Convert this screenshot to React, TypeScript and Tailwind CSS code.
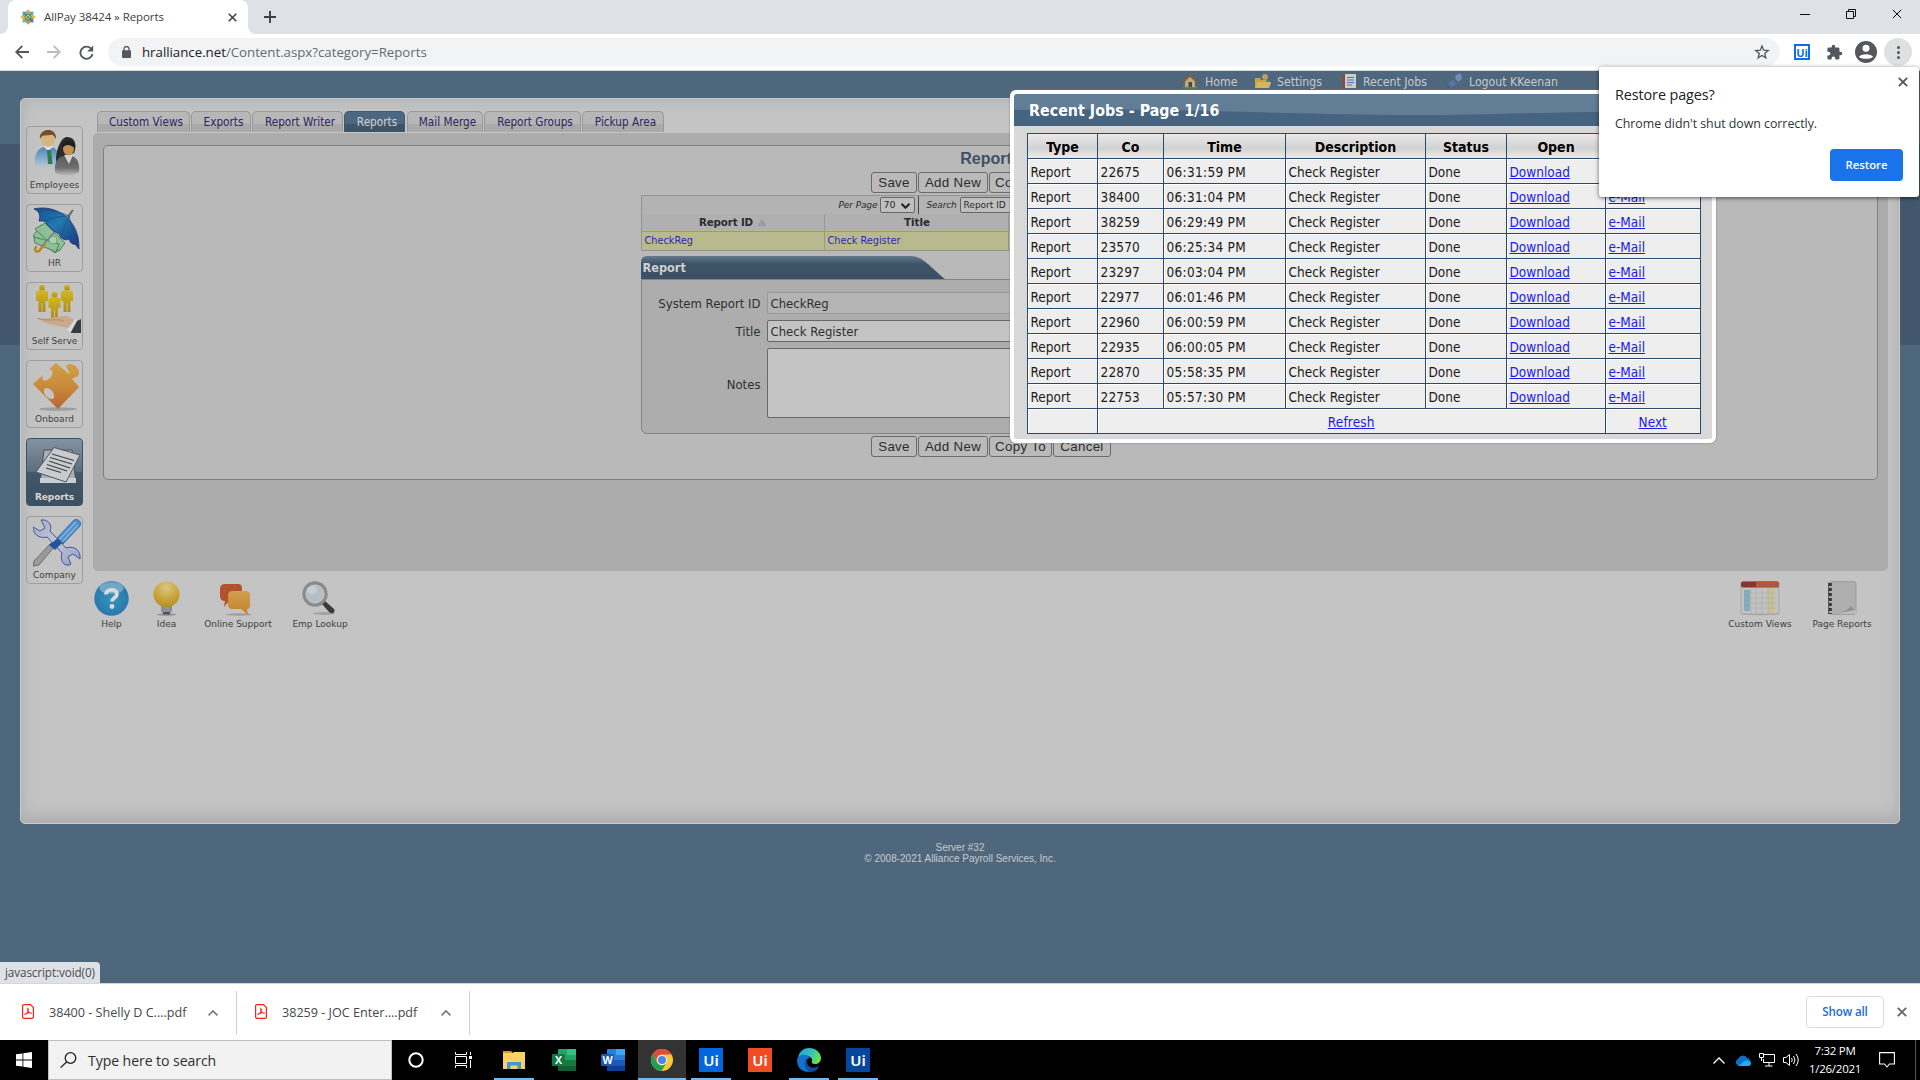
import React from "react";

const TAHOMA = "font-['DejaVu_Sans_Condensed','DejaVu_Sans',sans-serif] [font-stretch:condensed]";
const VERDANA = "font-['DejaVu_Sans',sans-serif]";
const SEGOE = "font-['Open_Sans','Noto_Sans',sans-serif]";

const jobs = [
  ["22675", "06:31:59 PM"],
  ["38400", "06:31:04 PM"],
  ["38259", "06:29:49 PM"],
  ["23570", "06:25:34 PM"],
  ["23297", "06:03:04 PM"],
  ["22977", "06:01:46 PM"],
  ["22960", "06:00:59 PM"],
  ["22935", "06:00:05 PM"],
  ["22870", "05:58:35 PM"],
  ["22753", "05:57:30 PM"],
];

/* ---------- browser frame ---------- */

function Favicon() {
  const petals = [0, 45, 90, 135, 180, 225, 270, 315];
  const colors = ["#e8a33c", "#5aa9c9", "#f0b04a", "#3c8a9c", "#e8863c", "#6fb7a8", "#f0b04a", "#4a9cc0"];
  return (
    <svg className="h-4 w-4" viewBox="0 0 16 16">
      {petals.map((a, i) => (
        <g key={a} transform={`rotate(${a} 8 8)`}>
          <path d="M8 7 L5.6 3 L8 0.3 L10.4 3 Z" fill={colors[i]} />
          <circle cx="8" cy="5" r="0.8" fill="#2f7d5b" />
        </g>
      ))}
      <circle cx="8" cy="8" r="1.6" fill="#4d9a64" />
    </svg>
  );
}

function Cross({ className, w = 1.6 }: { className: string; w?: number }) {
  return (
    <svg className={className} viewBox="0 0 10 10" fill="none" stroke="currentColor" strokeWidth={w}>
      <path d="M0.8 0.8 L9.2 9.2 M9.2 0.8 L0.8 9.2" />
    </svg>
  );
}

function TabStrip() {
  return (
    <div className="flex h-[34px] shrink-0 bg-[#dee1e6]">
      <div className="flex w-2 items-end bg-white"><div className="h-full w-2 rounded-br-lg bg-[#dee1e6]" /></div>
      <div className="flex h-[34px] w-[240px] items-center rounded-t-lg bg-white pl-[12px] pr-[11px]">
        <Favicon />
        <span className={`${SEGOE} ml-2 flex-1 whitespace-nowrap text-[11.5px] tracking-[-0.07px] text-[#3c4043]`}>AllPay 38424 » Reports</span>
        <Cross className="h-[9px] w-[9px] text-[#3c4043]" w={1.7} />
      </div>
      <div className="flex w-2 items-end bg-white"><div className="h-full w-2 rounded-bl-lg bg-[#dee1e6]" /></div>
      <svg className="ml-2 mt-[11px] h-3 w-3" viewBox="0 0 12 12" stroke="#3c4043" strokeWidth="1.9"><path d="M6 0V12M0 6H12" /></svg>
      <div className="ml-auto flex items-start pr-[18px] pt-[9px]">
        <svg className="mr-9 h-[10px] w-[10px]" viewBox="0 0 10 10" stroke="#111"><path d="M0 5.5H10" /></svg>
        <svg className="mr-9 h-[10px] w-[10px]" viewBox="0 0 10 10" fill="none" stroke="#111"><path d="M0.5 2.5H7.5V9.5H0.5Z M2.5 2.5V0.5H9.5V7.5H7.5" /></svg>
        <Cross className="h-[10px] w-[10px] text-black" w={1} />
      </div>
    </div>
  );
}

function Toolbar() {
  return (
    <div className="flex h-[37px] shrink-0 items-center border-b border-[#d5d7da] bg-white">
      <svg className="ml-[15px] h-[14px] w-[14px]" viewBox="0 0 14 14" fill="none" stroke="#54585d" strokeWidth="1.8"><path d="M14 7H1.5M7.3 0.9L1.2 7L7.3 13.1" /></svg>
      <svg className="ml-[18px] h-[14px] w-[14px]" viewBox="0 0 14 14" fill="none" stroke="#babcbe" strokeWidth="1.8"><path d="M0 7H12.5M6.7 0.9L12.8 7L6.7 13.1" /></svg>
      <svg className="ml-[18px] h-[15px] w-[15px]" viewBox="0 0 15 15" fill="none"><path d="M12.5 4.2A6.1 6.1 0 1 0 13.5 9" stroke="#54585d" strokeWidth="1.9" /><path d="M14.2 0.6V6.6H8.2Z" fill="#54585d" /></svg>
      <div className="ml-[14px] flex h-7 w-[1672px] items-center rounded-full bg-[#f1f3f4] pl-[14px] pr-[10px]">
        <svg className="h-3 w-[9px]" viewBox="0 0 9 12"><rect y="4.3" width="9" height="7.7" rx="1" fill="#54585d" /><path d="M2 5V3A2.5 2.5 0 0 1 7 3V5" fill="none" stroke="#54585d" strokeWidth="1.3" /></svg>
        <span className={`${SEGOE} ml-[11px] whitespace-nowrap pt-[1px] text-[13.3px] tracking-[-0.03px] text-[#676b70]`}><span className="text-[#202124]">hralliance.net</span>/Content.aspx?category=Reports</span>
        <svg className="ml-auto h-4 w-4" viewBox="0 0 24 24" fill="none" stroke="#54585d" strokeWidth="2"><path d="M12 3l2.5 6.3 6.8.5-5.2 4.3 1.7 6.7L12 17.2l-5.8 3.6 1.7-6.7L2.7 9.8l6.8-.5z" /></svg>
      </div>
      <div className={`ml-[14px] flex h-4 w-4 items-center justify-center border-2 border-[#0a6fe8] bg-white text-[11px] leading-none text-[#0a6fe8] ${SEGOE} font-bold`}>Ui</div>
      <svg className="ml-4 h-[17px] w-[17px]" viewBox="0 0 24 24" fill="#54585d"><path d="M20.500 11H19V7a2 2 0 0 0-2-2h-4V3.500a2.500 2.500 0 0 0-5 0V5H4a2 2 0 0 0-2 2v3.800h1.500a2.700 2.700 0 0 1 0 5.400H2V20a2 2 0 0 0 2 2h3.800v-1.500a2.700 2.700 0 0 1 5.400 0V22H17a2 2 0 0 0 2-2v-4h1.500a2.500 2.500 0 0 0 0-5z" /></svg>
      <svg className="ml-[12px] h-[22px] w-[22px]" viewBox="0 0 22 22"><circle cx="11" cy="11" r="11" fill="#54585d" /><circle cx="11" cy="7.200" r="3.500" fill="#fff" /><path d="M4 15.800C5.500 12.300 16.500 12.300 18 15.800C16.500 18.500 5.500 18.500 4 15.800Z" fill="#fff" /></svg>
      <div className="ml-[7px] flex h-7 w-7 flex-col items-center justify-center gap-[2px] rounded-full bg-[#dfe0e1]">
        <i className="h-[3px] w-[3px] rounded-full bg-[#54585d]" /><i className="h-[3px] w-[3px] rounded-full bg-[#54585d]" /><i className="h-[3px] w-[3px] rounded-full bg-[#54585d]" />
      </div>
    </div>
  );
}

/* ---------- page icons ---------- */

function EmployeesIcon() {
  return (
    <svg className="h-12 w-12" viewBox="0 0 48 48">
      <defs>
        <linearGradient id="shirt" x1="0" y1="0" x2="0" y2="1"><stop offset="0" stopColor="#5482b8" /><stop offset=".6" stopColor="#8db0cf" /><stop offset="1" stopColor="#c3c7ca" /></linearGradient>
        <linearGradient id="suit" x1="0" y1="0" x2="0" y2="1"><stop offset="0" stopColor="#5c5c5e" /><stop offset=".6" stopColor="#6f6f71" /><stop offset="1" stopColor="#c0c0c0" /></linearGradient>
      </defs>
      <path d="M2 36C1 24 5 19 12 18H18C24 19 27 24 26 36C19 40 9 40 2 36Z" fill="url(#shirt)" />
      <path d="M11 18L15 22L20 18L18 16H12Z" fill="#d8e2ea" />
      <path d="M14 21H18L19.500 35H15Z" fill="#2d7d4c" />
      <ellipse cx="15" cy="9.500" rx="7" ry="8.500" fill="#d5b580" />
      <path d="M7 10C5 -1 24 -3 23 10C21 7 20 5 17 6C13 7 9 5 7 10Z" fill="#73502d" />
      <path d="M24 34C21 30 26 8 34 8C43 8 44 17 41 24L30 29Z" fill="#2a2a2c" />
      <path d="M22 43C21 33 25 27 32 27H38C44 28 47 34 46 43C39 48 28 48 22 43Z" fill="url(#suit)" />
      <path d="M31 26L36 35L40 26Z" fill="#d4d4d4" />
      <ellipse cx="35.500" cy="19.500" rx="5.500" ry="7" fill="#c39252" />
      <path d="M29 20C28 9 42 9 42 19C38 17 34 13 29 20Z" fill="#1f1f21" />
    </svg>
  );
}

function HrIcon() {
  return (
    <svg className="h-12 w-12" viewBox="0 0 48 48">
      <defs><linearGradient id="umb" x1="0" y1="0" x2="1" y2="1"><stop offset="0" stopColor="#174d8c" /><stop offset=".45" stopColor="#2179b0" /><stop offset="1" stopColor="#1c2f7c" /></linearGradient></defs>
      <g fill="#8fbf98" stroke="#3f7d55" strokeWidth=".9">
        <path d="M0 29L8 18L28 42L22 46Z" /><path d="M2 22L12 16L32 36L26 44Z" /><path d="M1 30L26 37L23 45L2 36Z" />
      </g>
      <circle cx="20" cy="33" r="4" fill="#a9cfae" stroke="#5f9a70" strokeWidth=".7" />
      <path d="M38 7L8 40" stroke="#7d7d80" strokeWidth="1.500" />
      <path d="M12 37L6 44C3 46 1 43 3 40" fill="none" stroke="#b98427" strokeWidth="2.400" strokeLinecap="round" />
      <path d="M1 2C20 -3 47 10 46 42L42 37C39 38 37 35 36 32C32 34 28 32 26 27C20 24 15 20 12 14L6 14C8 8 6 4 1 2Z" fill="url(#umb)" stroke="#20306e" strokeWidth=".8" />
      <path d="M1 2C14 2 28 5 36 9C38 18 41 27 46 42M36 9L27 31M36 9C26 9 17 11 10 15" fill="none" stroke="#17507f" strokeWidth=".8" />
      <path d="M36 8L40 3" stroke="#67676b" strokeWidth="2" />
    </svg>
  );
}

function Figure({ x, y }: { x: number; y: number }) {
  return (
    <g transform={`translate(${x} ${y})`}>
      <circle cx="6" cy="2.700" r="2.900" />
      <path d="M0 8Q0 5.500 3 5.500H9Q12 5.500 12 8V16H9.500V27H6.400V18H5.600V27H2.500V16H0Z" />
    </g>
  );
}

function SelfServeIcon() {
  return (
    <svg className="h-12 w-12" viewBox="0 0 48 48">
      <defs><linearGradient id="gold" x1="0" y1="0" x2="0" y2="1"><stop offset="0" stopColor="#d1b722" /><stop offset="1" stopColor="#b08a18" /></linearGradient></defs>
      <g fill="url(#gold)"><Figure x={3} y={0} /><Figure x={28} y={0} /><Figure x={15.5} y={7} /></g>
      <path d="M4 33C14 35 22 31 34 31L42 35L38 43C28 42 14 40 4 33Z" fill="#cba98b" />
      <path d="M4 33C14 37 24 33 31 36" fill="none" stroke="#a98468" strokeWidth=".8" />
      <path d="M34 45L42 34L46 37V47H37Z" fill="#d3dbdf" /><path d="M38 47L44 36L48 34V48H38Z" fill="#3a3d40" />
    </svg>
  );
}

function OnboardIcon() {
  return (
    <svg className="h-12 w-12" viewBox="0 0 48 48">
      <defs><linearGradient id="puz" x1="0" y1="0" x2="0" y2="1"><stop offset="0" stopColor="#d0a047" /><stop offset=".5" stopColor="#c98b39" /><stop offset="1" stopColor="#bb6436" /></linearGradient></defs>
      <ellipse cx="25" cy="46" rx="19" ry="1.800" fill="#8d8d8d" opacity=".7" />
      <path d="M23 0L36 11C38 9 32 6 34 2C38 -1 47 4 46 11C45 15 40 14 39 16L46 24L25 46L0 21Z" fill="url(#puz)" />
      <ellipse cx="14.500" cy="12" rx="4" ry="6.500" transform="rotate(40 14.500 12)" fill="#c4c4c4" />
      <ellipse cx="16" cy="30.500" rx="4" ry="6.500" transform="rotate(-40 16 30.500)" fill="#c4c4c4" />
    </svg>
  );
}

function ReportsIcon() {
  return (
    <svg className="h-12 w-12" viewBox="0 0 48 48">
      <path d="M10 7H38L42 40H6Z" fill="#a9b1b7" stroke="#4a4f54" />
      <path d="M6 35H42V40H6Z" fill="#c7d0d8" />
      <path d="M20 4.500L46 12L32 39L2 29Z" fill="#c9ccce" stroke="#55595d" />
      <path d="M18 11L40 17.500M16 14.500L38 21M15 18L36 25M13 21.500L33 28M12 25L27 29.500" stroke="#3c4044" strokeWidth="1.100" />
    </svg>
  );
}

function CompanyIcon() {
  return (
    <svg className="h-12 w-12" viewBox="0 0 48 48">
      <defs><linearGradient id="wr" x1="0" y1="0" x2="1" y2="1"><stop offset="0" stopColor="#9fabce" /><stop offset=".5" stopColor="#c4c7d0" /><stop offset="1" stopColor="#8d9acb" /></linearGradient></defs>
      <path d="M8 1C14 0 20 5 17 12L33 29C42 26 48 32 47 40L40 35L35 38L38 45C33 49 26 43 29 34L14 18C6 20 0 15 0 8L7 12L12 9Z" fill="url(#wr)" stroke="#4a559c" strokeWidth="1" />
      <path d="M22 27L6 46L0 47L1 42L18 24Z" fill="#9b9b9d" stroke="#5d5d60" strokeWidth=".8" />
      <path d="M16 26L25 19L29 24L22 31Z" fill="#27539c" />
      <path d="M24 19L41 1C45 -1 49 3 47 7L30 25Z" fill="#4f8fc9" stroke="#2b5e9e" strokeWidth=".8" />
      <path d="M27 20L43 3M30 22L45 6" stroke="#86b6da" strokeWidth="1.500" />
    </svg>
  );
}

const sideItems = [
  { label: "Employees", icon: <EmployeesIcon /> },
  { label: "HR", icon: <HrIcon /> },
  { label: "Self Serve", icon: <SelfServeIcon /> },
  { label: "Onboard", icon: <OnboardIcon /> },
  { label: "Reports", icon: <ReportsIcon />, active: true },
  { label: "Company", icon: <CompanyIcon /> },
];

function Sidebar() {
  return (
    <div className="flex w-[72px] shrink-0 flex-col gap-[10px] pl-[5px] pt-[27px]">
      {sideItems.map((s) => (
        <div
          key={s.label}
          className={
            s.active
              ? "h-[68px] w-[57px] rounded border border-[#3c5268] bg-[linear-gradient(#8493a1,#5d6e7f_49%,#42576a_51%,#3d4f60)]"
              : "h-[68px] w-[57px] rounded border border-[#9e9e9e]"
          }
        >
          <div className={s.active ? "ml-[7px] mt-[4px] h-12" : "ml-[6px] mt-[2px] h-12"}>{s.icon}</div>
          <div
            className={
              s.active
                ? `${VERDANA} text-center text-[9px] font-bold leading-[12px] tracking-[-0.1px] text-[#d8d8d8]`
                : `${VERDANA} mt-[2px] whitespace-nowrap text-center text-[9px] leading-[12px] text-[#3f3f3f]`
            }
          >
            {s.label}
          </div>
        </div>
      ))}
    </div>
  );
}

function HeaderLinks() {
  const link = `${TAHOMA} whitespace-nowrap pt-[2px] text-[12.2px] text-[#c6c9cc]`;
  return (
    <div className="flex h-5 items-center pl-[1182px]">
      <svg className="h-4 w-4" viewBox="0 0 16 16"><path d="M3 8V15H13V8L8 3Z" fill="#b9ab8c" /><path d="M0 8.500L8 1L16 8.500L14.500 10L8 4L1.500 10Z" fill="#8c5a35" /><rect x="6.500" y="9" width="3.500" height="6" fill="#57482f" /><rect y="14" width="16" height="1.500" fill="#5f8a4d" /></svg>
      <span className={`${link} ml-[7px] w-[50px]`}>Home</span>
      <svg className="h-4 w-4" viewBox="0 0 16 16"><circle cx="10" cy="4" r="3" fill="#c29a63" /><path d="M6 8Q10 5 14 8V12H6Z" fill="#5680b0" /><path d="M0 5H5L6 7H11V9H16L14 15H0Z" fill="#c9a445" /><path d="M2 9H16L14 15H0Z" fill="#d3b65c" /></svg>
      <span className={`${link} ml-[6px] w-[64px]`}>Settings</span>
      <svg className="h-4 w-4" viewBox="0 0 16 16"><rect x="2" y="1" width="13" height="14" fill="#c9cdd1" /><rect x="1" y="1" width="3" height="14" fill="#8d4a44" /><path d="M6 4.500H13M6 7H13M6 9.500H13M6 12H11" stroke="#5674a8" /></svg>
      <span className={`${link} ml-[6px] w-[84px]`}>Recent Jobs</span>
      <svg className="h-4 w-4" viewBox="0 0 16 16"><path d="M9 2L14 0L15 6L11 9L8 5Z" fill="#6d8bb5" /><path d="M2 9L6 7L9 11L5 14L1 13Z" fill="#5877a8" /><path d="M0 16L3 12M14 1L16 0" stroke="#3d5a88" strokeWidth="1.500" /></svg>
      <span className={`${link} ml-[6px]`}>Logout KKeenan</span>
    </div>
  );
}

/* ---------- page body ---------- */

const pageTabs = [
  { label: "Custom Views", box: "w-[93px] mr-[1px]" },
  { label: "Exports", box: "w-[60px] mr-[1px]" },
  { label: "Report Writer", box: "w-[91px] mr-[1px]" },
  { label: "Reports", box: "w-[61px] mr-[2px]", active: true },
  { label: "Mail Merge", box: "w-[76px] mr-[1px]" },
  { label: "Report Groups", box: "w-[97px] mr-[1px]" },
  { label: "Pickup Area", box: "w-[82px]" },
];

function PageTabs() {
  return (
    <div className="flex h-[21px] pl-[4px]">
      {pageTabs.map((t) => (
        <div
          key={t.label}
          className={`${t.box} ${TAHOMA} flex items-center justify-center whitespace-nowrap rounded-t-[5px] border border-b-0 pl-[5px] pt-[2px] text-[11.7px] ${
            t.active
              ? "border-[#3f5870] bg-[linear-gradient(#4c6780_60%,#3e5468_61%)] text-[#d0d0d0]"
              : "border-[#989898] bg-[linear-gradient(#b7b7b7_60%,#aaaaaa_61%)] text-[#2c2560]"
          }`}
        >
          {t.label}
        </div>
      ))}
    </div>
  );
}

function ButtonRow() {
  const b = "flex h-[21px] items-center justify-center whitespace-nowrap rounded-[3px] border border-[#6b6b6b] bg-[#bababa]";
  return (
    <div className="flex justify-center gap-[1px] pl-[1px] font-['Liberation_Sans',Arial,sans-serif] text-[13.33px] tracking-[0.3px] text-[#2c2c2c]">
      <div className={`${b} w-[46px]`}>Save</div>
      <div className={`${b} w-[70px]`}>Add New</div>
      <div className={`${b} w-[63px]`}>Copy To</div>
      <div className={`${b} w-[58px]`}>Cancel</div>
    </div>
  );
}

function ReportForm() {
  return (
    <div className="mx-auto flex w-[700px] flex-col">
      <div className="flex h-[26px] items-center justify-center font-['Liberation_Sans',Arial,sans-serif] text-[16px] font-bold text-[#3d5266]">Reports</div>
      <ButtonRow />
      <div className={`${VERDANA} mt-[2px] h-[56px] border border-[#939393] text-[#2b2b2b]`}>
        <div className="flex h-[18px] items-center bg-[#b3b3b3] pl-[197px] text-[9px]">
          <span className="w-[41px] whitespace-nowrap pt-[2px] italic tracking-[-0.1px]">Per Page</span>
          <span className="flex h-4 w-[35px] items-center justify-between rounded-[2px] border border-[#666] bg-[#bfbfbf] pl-[3px] pr-1 pt-[1px] text-[9.5px]">
            70
            <svg className="h-[6px] w-[9px]" viewBox="0 0 9 6" fill="none" stroke="#222" strokeWidth="2"><path d="M0.500 0.800L4.500 4.800L8.500 0.800" /></svg>
          </span>
          <span className="ml-[3px] h-[18px] w-px bg-[#444]" />
          <span className="ml-[8px] w-[33px] whitespace-nowrap pt-[2px] italic tracking-[-0.2px]">Search</span>
          <span className="flex h-4 w-[90px] items-center rounded-[2px] border border-[#666] bg-[#bfbfbf] pl-[3px] pt-[2px]">Report ID</span>
        </div>
        <div className="grid h-4 grid-cols-[183px_1fr_331px] bg-[#b0b0b0] text-[10.3px] font-bold leading-[17px]">
          <div className="flex items-center justify-center gap-[5px] border-b border-r border-[#979797] tracking-[-0.15px]">
            Report ID
            <svg className="h-[7px] w-2" viewBox="0 0 8 7"><path d="M4 0.700L7.500 6.500H0.500Z" fill="#a0a0a0" stroke="#888" strokeWidth=".6" /></svg>
          </div>
          <div className="border-b border-r border-[#979797] pl-[2px] text-center">Title</div>
          <div className="border-b border-[#979797]" />
        </div>
        <div className={`grid h-5 grid-cols-[183px_1fr_331px] bg-[#b9b98f] ${TAHOMA} text-[10.8px] leading-[21px] text-[#2d28b8]`}>
          <div className="border-r border-[#979797] pl-[3px]">CheckReg</div>
          <div className="border-r border-[#979797] pl-[3px]">Check Register</div>
          <div />
        </div>
      </div>
      <div className="mt-[5px] flex h-[23px] items-center">
        <div className={`relative flex h-[23px] w-[304px] items-center ${TAHOMA} text-[12.6px] font-bold text-[#cfcfcf]`}>
          <svg className="absolute inset-0 h-full w-full" viewBox="0 0 304 23">
            <defs><linearGradient id="cap" x1="0" y1="0" x2="0" y2="1"><stop offset="0" stopColor="#66788a" /><stop offset=".35" stopColor="#3d5368" /><stop offset="1" stopColor="#3b5064" /></linearGradient></defs>
            <path d="M0 23V6Q0 0 6 0H270C282 0 290 12 304 23Z" fill="url(#cap)" />
          </svg>
          <span className="relative pl-[2px] pt-[1px]">Report</span>
        </div>
      </div>
      <div className={`h-[155px] rounded-b-md border border-[#848484] bg-[#adadad] pt-3 ${TAHOMA} text-[13px] text-[#2f2f2f]`}>
        <div className="flex h-[22px] items-center"><span className="w-[119px] pt-[2px] text-right">System Report ID</span><div className="ml-[6px] h-[22px] w-[500px] rounded-[2px] border border-[#999] bg-[#b4b4b4] pl-[3px] leading-[22px]">CheckReg</div></div>
        <div className="mt-[6px] flex h-[22px] items-center"><span className="w-[119px] pt-[2px] text-right">Title</span><div className="ml-[6px] h-[22px] w-[500px] rounded-[2px] border border-[#686868] bg-[#c4c4c4] pl-[3px] leading-[22px]">Check Register</div></div>
        <div className="mt-[6px] flex h-[70px] items-center"><span className="w-[119px] pt-[4px] text-right">Notes</span><div className="ml-[6px] h-[70px] w-[500px] rounded-[2px] border border-[#686868] bg-[#c4c4c4]" /></div>
      </div>
      <div className="mt-[2px]"><ButtonRow /></div>
    </div>
  );
}

function BottomTools() {
  const label = `${VERDANA} mt-[2px] whitespace-nowrap text-center text-[9px] leading-[12px] text-[#404040]`;
  return (
    <div className="flex pr-[16px] pt-[10px]">
      <div className="flex w-[37px] flex-col items-center">
        <svg className="h-[35px] w-[35px]" viewBox="0 0 35 35">
          <defs><radialGradient id="help" cx=".5" cy=".5" r=".6"><stop offset="0" stopColor="#3095bf" /><stop offset="1" stopColor="#2b73a8" /></radialGradient></defs>
          <circle cx="17.500" cy="17.500" r="17.200" fill="url(#help)" />
          <ellipse cx="17.500" cy="7" rx="12" ry="6" fill="#b6cfdb" opacity=".5" />
          <path d="M12 13.500C12 7.500 23 7.500 23 13C23 16.500 18 16.800 18 20.500" fill="none" stroke="#dadada" strokeWidth="3.800" /><circle cx="18" cy="25.500" r="2.400" fill="#dadada" />
        </svg>
        <div className={label}>Help</div>
      </div>
      <div className="ml-[18px] flex w-[37px] flex-col items-center">
        <svg className="h-[35px] w-[27px]" viewBox="0 0 27 35">
          <defs><radialGradient id="bulb" cx=".5" cy=".25" r=".75"><stop offset="0" stopColor="#d9c983" /><stop offset=".6" stopColor="#c9a53a" /><stop offset="1" stopColor="#b68f23" /></radialGradient></defs>
          <ellipse cx="13.500" cy="33.500" rx="10" ry="1.400" fill="#999" /><rect x="8" y="24" width="11" height="7.500" rx="1.500" fill="#8e9296" /><rect x="10" y="31" width="7" height="2.500" fill="#4f5356" />
          <path d="M13.500 0.500A12.800 12.800 0 0 1 20 24.500C16 26.500 11 26.500 7 24.500A12.800 12.800 0 0 1 13.500 0.500Z" fill="url(#bulb)" />
        </svg>
        <div className={label}>Idea</div>
      </div>
      <div className="ml-[19px] flex w-[68px] flex-col items-center">
        <svg className="mr-[5px] h-[35px] w-[31px]" viewBox="0 0 31 35">
          <defs><linearGradient id="bub" x1="0" y1="0" x2="0" y2="1"><stop offset="0" stopColor="#cfa04f" /><stop offset="1" stopColor="#c77f2b" /></linearGradient></defs>
          <ellipse cx="19" cy="33.500" rx="13" ry="1.200" fill="#9d9d9d" />
          <path d="M5 3H18Q22 3 22 7V16Q22 20 18 20H9L4 26L5 20Q0 20 0 15V8Q0 3 5 3Z" fill="#b3532b" />
          <path d="M13 10H26Q30 10 30 14V24Q30 28 27 28L28 34L21 28H13Q8 28 8 24V14Q8 10 13 10Z" fill="url(#bub)" />
        </svg>
        <div className={label}>Online Support</div>
      </div>
      <div className="ml-[20px] flex w-14 flex-col items-center">
        <svg className="mr-[3px] h-[35px] w-[34px]" viewBox="0 0 34 35">
          <ellipse cx="22" cy="32.500" rx="11" ry="1.400" fill="#a3a3a3" /><path d="M23 20L32 28C34 31 30 34 27 31L20 23Z" fill="#3a3a3a" />
          <circle cx="13" cy="13" r="11" fill="#b4c0c8" stroke="#8b8b8b" strokeWidth="3.400" /><circle cx="13" cy="13" r="9" fill="none" stroke="#c6c6c6" /><ellipse cx="10" cy="9" rx="5" ry="4" fill="#ccd5da" opacity=".7" />
        </svg>
        <div className={label}>Emp Lookup</div>
      </div>
      <div className="ml-auto flex w-16 flex-col items-center">
        <svg className="h-[35px] w-[40px]" viewBox="0 0 40 35">
          <ellipse cx="20" cy="33" rx="20" ry="1.200" fill="#a4a4a4" /><rect x="1" y="1" width="38" height="32" rx="2" fill="#c2c2c2" stroke="#a6a6a6" />
          <rect x="1" y="0.500" width="38" height="6" rx="2" fill="#86362f" /><path d="M16 0.500H37Q39 0.500 39 3V6H16Z" fill="#b0583a" />
          <rect x="4" y="9" width="6" height="21" fill="#7fabbd" /><rect x="28" y="7" width="6" height="25" fill="#c6c18d" />
          <path d="M11 7V32M16 7V32M22 7V32M28 7V32M4 12H36M4 17H36M4 22H36M4 27H36" stroke="#b0b0b0" strokeWidth=".7" />
        </svg>
        <div className={label}>Custom Views</div>
      </div>
      <div className="ml-[20px] flex w-[60px] flex-col items-center">
        <svg className="h-[35px] w-[29px]" viewBox="0 0 29 35">
          <rect x="2" y="0.500" width="26" height="33" rx="2" fill="#aeaeae" stroke="#9e9e9e" /><path d="M8 33L22 27L24 25L28 30V33Z" fill="#bcbcbc" /><path d="M9 33C16 31 20 30 27 29L23 25C20 29 14 31 9 33Z" fill="#8e8e8e" />
          <path d="M2 2V33" stroke="#333" strokeWidth="3.500" strokeDasharray="3 2" /><path d="M0.500 1.500V32" stroke="#555" />
        </svg>
        <div className={label}>Page Reports</div>
      </div>
    </div>
  );
}

function WebPage() {
  return (
    <div className="h-[912px] shrink-0 bg-[linear-gradient(#4f677d_0_73px,#43576c_73px_274px,#4f677d_274px)]">
      <HeaderLinks />
      <div className="mx-5 mt-[7px] flex h-[726px] rounded-[5px] border border-[#cacaca] bg-[#c4c4c4] shadow-[inset_0_0_16px_#aeaeae,inset_0_-16px_18px_-10px_#b0b0b0]">
        <Sidebar />
        <div className="w-[1806px] pr-[11px] pt-3">
          <PageTabs />
          <div className="h-[439px] rounded-[5px] border-t border-[#c6c6c6] bg-[#acacac] px-[10px] pt-3">
            <div className="h-[335px] rounded-[5px] border border-[#808080] bg-[#b9b9b9]">
              <ReportForm />
            </div>
          </div>
          <BottomTools />
        </div>
      </div>
      <div className="mt-[18px] text-center font-['Liberation_Sans',Arial,sans-serif] text-[10px] leading-[11px] text-[#c7cacc]">
        <div>Server #32</div>
        <div>© 2008-2021 Alliance Payroll Services, Inc.</div>
      </div>
    </div>
  );
}

/* ---------- overlays ---------- */

function JobsDialog() {
  const head = "border-b border-r border-[#2b4a6b] bg-[linear-gradient(#e9e9e9,#d2d2d2_60%,#ececec)] text-center text-[14px] font-bold text-black";
  const cell = "border-b border-r border-[#2b4a6b] pl-[2.5px] text-[#1b1b1b] shadow-[inset_1px_1px_0_#fff]";
  const link = "text-[#1a1aee] underline";
  return (
    <div className={`absolute left-[1010px] top-[90px] z-10 h-[353px] w-[706px] rounded-md border-4 border-white bg-[#d8d8d8] shadow-[0_0_2px_#777] ${TAHOMA}`}>
      <div className="relative flex h-8 items-center overflow-hidden rounded-t bg-[#46647f] pl-[15px]">
        <svg className="absolute inset-0 h-8 w-full" viewBox="0 0 698 32" preserveAspectRatio="none"><path d="M0 0H698V18C560 16 470 22 380 21C250 20 180 14 0 16Z" fill="#627e96" /></svg>
        <span className="relative pt-[2px] text-[15.8px] font-bold tracking-[0.05px] text-white">Recent Jobs - Page 1/16</span>
      </div>
      <div className="ml-[13px] mt-[7px] grid w-[674px] grid-cols-[70px_66px_122px_140px_81px_99px_95px] auto-rows-[25px] border-l border-t border-[#2b4a6b] bg-[#eeeeee] text-[13.5px] leading-[26px]">
        {["Type", "Co", "Time", "Description", "Status", "Open", "e-Mail"].map((h) => (
          <div key={h} className={head}>{h}</div>
        ))}
        {jobs.map(([co, time]) => (
          <React.Fragment key={co}>
            <div className={cell}>Report</div>
            <div className={`${cell} tracking-[0.15px]`}>{co}</div>
            <div className={`${cell} tracking-[0.3px]`}>{time}</div>
            <div className={cell}>Check Register</div>
            <div className={cell}>Done</div>
            <div className={cell}><span className={link}>Download</span></div>
            <div className={cell}><span className={link}>e-Mail</span></div>
          </React.Fragment>
        ))}
        <div className={cell} />
        <div className={`${cell} col-span-5 text-center`}><span className={`${link} mr-[3px] tracking-[0.15px]`}>Refresh</span></div>
        <div className={`${cell} text-center`}><span className={`${link} mr-[3px]`}>Next</span></div>
      </div>
    </div>
  );
}

function RestoreBubble() {
  return (
    <div className={`absolute left-[1599px] top-[67px] z-20 flex h-[130px] w-[320px] flex-col rounded-[3px] bg-white pl-4 pr-4 shadow-[0_1px_4px_rgba(0,0,0,0.6)] ${SEGOE}`}>
      <div className="-mr-[5px] flex h-[15px] items-end justify-end"><Cross className="mb-[-5px] h-[10px] w-[10px] text-[#54585d]" w={1.9} /></div>
      <div className="mt-[2px] text-[14.4px] leading-[22px] tracking-[-0.1px] text-[#202124]">Restore pages?</div>
      <div className="mt-[8px] text-[12.4px] leading-5 tracking-[-0.04px] text-[#303336]">Chrome didn't shut down correctly.</div>
      <div className="mt-[15px] flex h-8 w-[73px] items-center justify-center self-end rounded bg-[#1a73e8] text-[11.3px] font-semibold text-white">Restore</div>
    </div>
  );
}

/* ---------- downloads and taskbar ---------- */

function DownloadItem({ name, box }: { name: string; box: string }) {
  return (
    <div className={`${box} flex h-11 items-center border-r border-[#cfcfcf]`}>
      <svg className="mb-[3px] h-[15px] w-3" viewBox="0 0 12 15" fill="none" stroke="#f02418"><path d="M2 0.600H8.500L11.400 3.500V13Q11.400 14.400 10 14.400H2Q0.600 14.400 0.600 13V2Q0.600 0.600 2 0.600Z" strokeWidth="1.200" /><path d="M2.500 10.500C6 9.500 7 6 5.800 4.500C5 6.500 7 9.500 9.800 9.300C7 8.300 4.500 9 2.500 10.500Z" strokeWidth="1.100" /></svg>
      <span className={`${SEGOE} ml-[15px] w-[159px] whitespace-nowrap text-[12.600px] text-[#45484c]`}>{name}</span>
      <svg className="h-[6px] w-[10px]" viewBox="0 0 10 6" fill="none" stroke="#77797c" strokeWidth="1.700"><path d="M0.600 5.400L5 1L9.400 5.400" /></svg>
    </div>
  );
}

function DownloadBar() {
  return (
    <div className="flex h-[57px] shrink-0 items-center border-t border-[#d4d6d9] bg-white pt-[2px]">
      <DownloadItem name="38400 - Shelly D C....pdf" box="w-[237px] pl-[22px]" />
      <DownloadItem name="38259 - JOC Enter....pdf" box="w-[233px] pl-[18px]" />
      <div className={`${SEGOE} mb-[2px] ml-auto flex h-8 w-[78px] items-center justify-center rounded border border-[#d9dbde] pb-[1px] text-[11.600px] font-semibold tracking-[-0.150px] text-[#1a6be0]`}>Show all</div>
      <Cross className="mb-[3px] ml-[13px] mr-[13px] h-[10px] w-[10px] text-[#66696c]" w={1.9} />
    </div>
  );
}

function UiTile({ color }: { color: string }) {
  return <div className={`${color} flex h-6 w-6 items-center justify-center font-['Noto_Sans',sans-serif] text-[15px] font-semibold leading-none text-white`}>Ui</div>;
}

function Office({ dark, mid, light, deep, letter }: { dark: string; mid: string; light: string; deep: string; letter: string }) {
  return (
    <svg className="h-[22px] w-6" viewBox="0 0 24 22">
      <rect x="6" width="18" height="22" rx="1" fill={mid} /><rect x="15" width="9" height="6" fill={light} /><rect x="6" y="11" width="18" height="5.500" fill={dark} /><rect x="6" y="16.500" width="18" height="5.500" fill={deep} />
      <rect y="5" width="13" height="12" rx="1" fill={dark} /><text x="6.500" y="14.800" fontSize="10.500" fontWeight="700" fill="#fff" textAnchor="middle" fontFamily="Open Sans, sans-serif">{letter}</text>
    </svg>
  );
}

function Task({ children, bar, active }: { children: React.ReactNode; bar?: boolean; active?: boolean }) {
  return (
    <div className={`flex h-10 w-12 flex-col items-center ${active ? "bg-[#333333]" : ""}`}>
      <div className="flex h-[38px] items-center pt-[2px]">{children}</div>
      {bar && <div className={active ? "h-[2px] w-12 bg-[#76b9ed]" : "h-[2px] w-10 bg-[#76b9ed]"} />}
    </div>
  );
}

function Taskbar() {
  return (
    <div className={`flex h-10 shrink-0 bg-black ${SEGOE}`}>
      <div className="flex w-12 items-center justify-center"><svg className="h-4 w-4" viewBox="0 0 16 16" fill="#fff"><path d="M0 2.300L6.500 1.400V7.600H0ZM7.300 1.300L16 0V7.600H7.300ZM0 8.400H6.500V14.600L0 13.700ZM7.300 8.400H16V16L7.300 14.700Z" /></svg></div>
      <div className="flex w-[344px] items-center border border-[#bfbfbf] bg-[#f2f2f2] pl-[11px]">
        <svg className="h-4 w-[17px]" viewBox="0 0 17 16" fill="none" stroke="#222" strokeWidth="1.300"><circle cx="10.500" cy="6" r="5.300" /><path d="M6.800 9.700L0.500 15.600" /></svg>
        <span className="ml-[11px] pt-[2px] text-[14.100px] tracking-[-0.080px] text-[#2f2f2f]">Type here to search</span>
      </div>
      <div className="flex w-[98px] items-center pl-4">
        <svg className="h-4 w-4" viewBox="0 0 16 16" fill="none" stroke="#fff" strokeWidth="2"><circle cx="8" cy="8" r="6.700" /></svg>
        <svg className="ml-[31px] h-4 w-[17px]" viewBox="0 0 17 16" fill="none" stroke="#fff"><path d="M0.500 0V2.500H11.500V0M0.500 16V13.500H11.500V16M0.500 4.500H11.500V11.500H0.500ZM15.500 0V3M15.500 8V16" /><rect x="14" y="4" width="3" height="3" fill="#fff" stroke="none" /></svg>
      </div>
      <div className="flex gap-[1px]">
        <Task bar><svg className="h-5 w-[22px]" viewBox="0 0 22 20"><path d="M0 1H8L10 3H0Z" fill="#d99a12" /><path d="M0 3H10L11 2H22V19H0Z" fill="#fbd163" /><path d="M4 19V12H18V19H14.500V15.500H7.500V19Z" fill="#3f97d3" /></svg></Task>
        <div className="pl-[1px]"><Task><Office letter="X" dark="#107c41" mid="#21a366" light="#33c481" deep="#185c37" /></Task></div>
        <Task><Office letter="W" dark="#185abd" mid="#2b7cd3" light="#41a5ee" deep="#103f91" /></Task>
        <Task bar active>
          <svg className="h-[22px] w-[22px]" viewBox="0 0 22 22">
            <circle cx="11" cy="11" r="11" fill="#fbc934" /><path d="M1.500 5.500A11 11 0 0 1 20.500 5.500H11A5.500 5.500 0 0 0 6.200 13.700Z" fill="#dd4b3e" /><path d="M1.500 5.500A11 11 0 0 0 10.500 22L15.700 13.700A5.500 5.500 0 0 1 6.200 13.700Z" fill="#1e9e54" />
            <circle cx="11" cy="11" r="5" fill="#f1f1f1" /><circle cx="11" cy="11" r="4" fill="#4586f1" />
          </svg>
        </Task>
        <Task bar><UiTile color="bg-[#0067df]" /></Task>
        <Task><UiTile color="bg-[#f04b23]" /></Task>
        <Task bar>
          <svg className="h-6 w-6" viewBox="0 0 24 24">
            <defs><linearGradient id="edge" x1="0" y1="0" x2="1" y2=".4"><stop offset="0" stopColor="#1b9de2" /><stop offset=".6" stopColor="#35c1b8" /><stop offset="1" stopColor="#66e04c" /></linearGradient></defs>
            <path d="M1 10C2 3 7 0 12 0C19 0 24 5 24 10C24 14 21 16 18 16C15 16 14 15 15 13C16 8 7 6 1 10Z" fill="url(#edge)" />
            <path d="M0 12C1 6 10 5 13 10C9 10 8 15 10 18C13 22 18 21 22 18C16 27 0 26 0 12Z" fill="#1273cf" /><path d="M10 10C6 13 7 22 14 24C18 24 21 21 22 18C15 22 8 18 10 10Z" fill="#0c4f9e" />
          </svg>
        </Task>
        <Task bar><UiTile color="bg-[#05479b]" /></Task>
      </div>
      <div className="ml-auto flex items-center text-white">
        <svg className="h-[7px] w-3" viewBox="0 0 12 7" fill="none" stroke="#fff" strokeWidth="1.300"><path d="M0.500 6.500L6 1L11.500 6.500" /></svg>
        <svg className="ml-[10px] h-[11px] w-4" viewBox="0 0 16 11"><path d="M3 10.500A3.500 3.500 0 0 1 3 4A5 5 0 0 1 12 3A4 4 0 0 1 13.500 10.500Z" fill="#0f6fc6" /><path d="M3 11L10 5.500Q15.500 5 16 8.500Q16 11 13 11Z" fill="#28a8ea" /></svg>
        <svg className="ml-2 h-[14px] w-4" viewBox="0 0 16 14" fill="none" stroke="#fff"><path d="M5 1.500H15.500V9.500H4.500V6M10 9.500V13M6 13H13.500M0.500 0.500H4.500V4.500H0.500ZM2.500 4.500V8" /></svg>
        <svg className="ml-2 h-[14px] w-4" viewBox="0 0 16 14" fill="none" stroke="#fff"><path d="M0.500 4.500H3L6.500 1.500V12.500L3 9.500H0.500ZM8.500 5Q10 7 8.500 9M10.500 3Q13.500 7 10.500 11M13 1Q17.500 7 13 13" /></svg>
        <div className="ml-[13px] flex w-[46px] flex-col items-center whitespace-nowrap text-[11.500px] leading-[18px] tracking-[-0.250px]"><span>7:32 PM</span><span>1/26/2021</span></div>
        <svg className="ml-[21px] h-4 w-4" viewBox="0 0 16 16" fill="none" stroke="#fff" strokeWidth="1.100"><path d="M0.600 0.600H15.400V12H10.500L8 15L5.500 12H0.600Z" /></svg>
        <div className="ml-5 mr-1 h-10 w-px bg-[#555]" />
      </div>
    </div>
  );
}

export default function App() {
  return (
    <div className="relative flex h-[1080px] w-[1920px] flex-col overflow-hidden bg-white">
      <TabStrip />
      <Toolbar />
      <WebPage />
      <DownloadBar />
      <Taskbar />
      <div className={`absolute left-0 top-[962px] flex h-[21px] w-[100px] items-center whitespace-nowrap rounded-tr bg-[#dee1e6] pl-[5px] text-[11.700px] tracking-[-0.100px] text-[#4a4d51] ${SEGOE}`}>javascript:void(0)</div>
      <JobsDialog />
      <RestoreBubble />
    </div>
  );
}
